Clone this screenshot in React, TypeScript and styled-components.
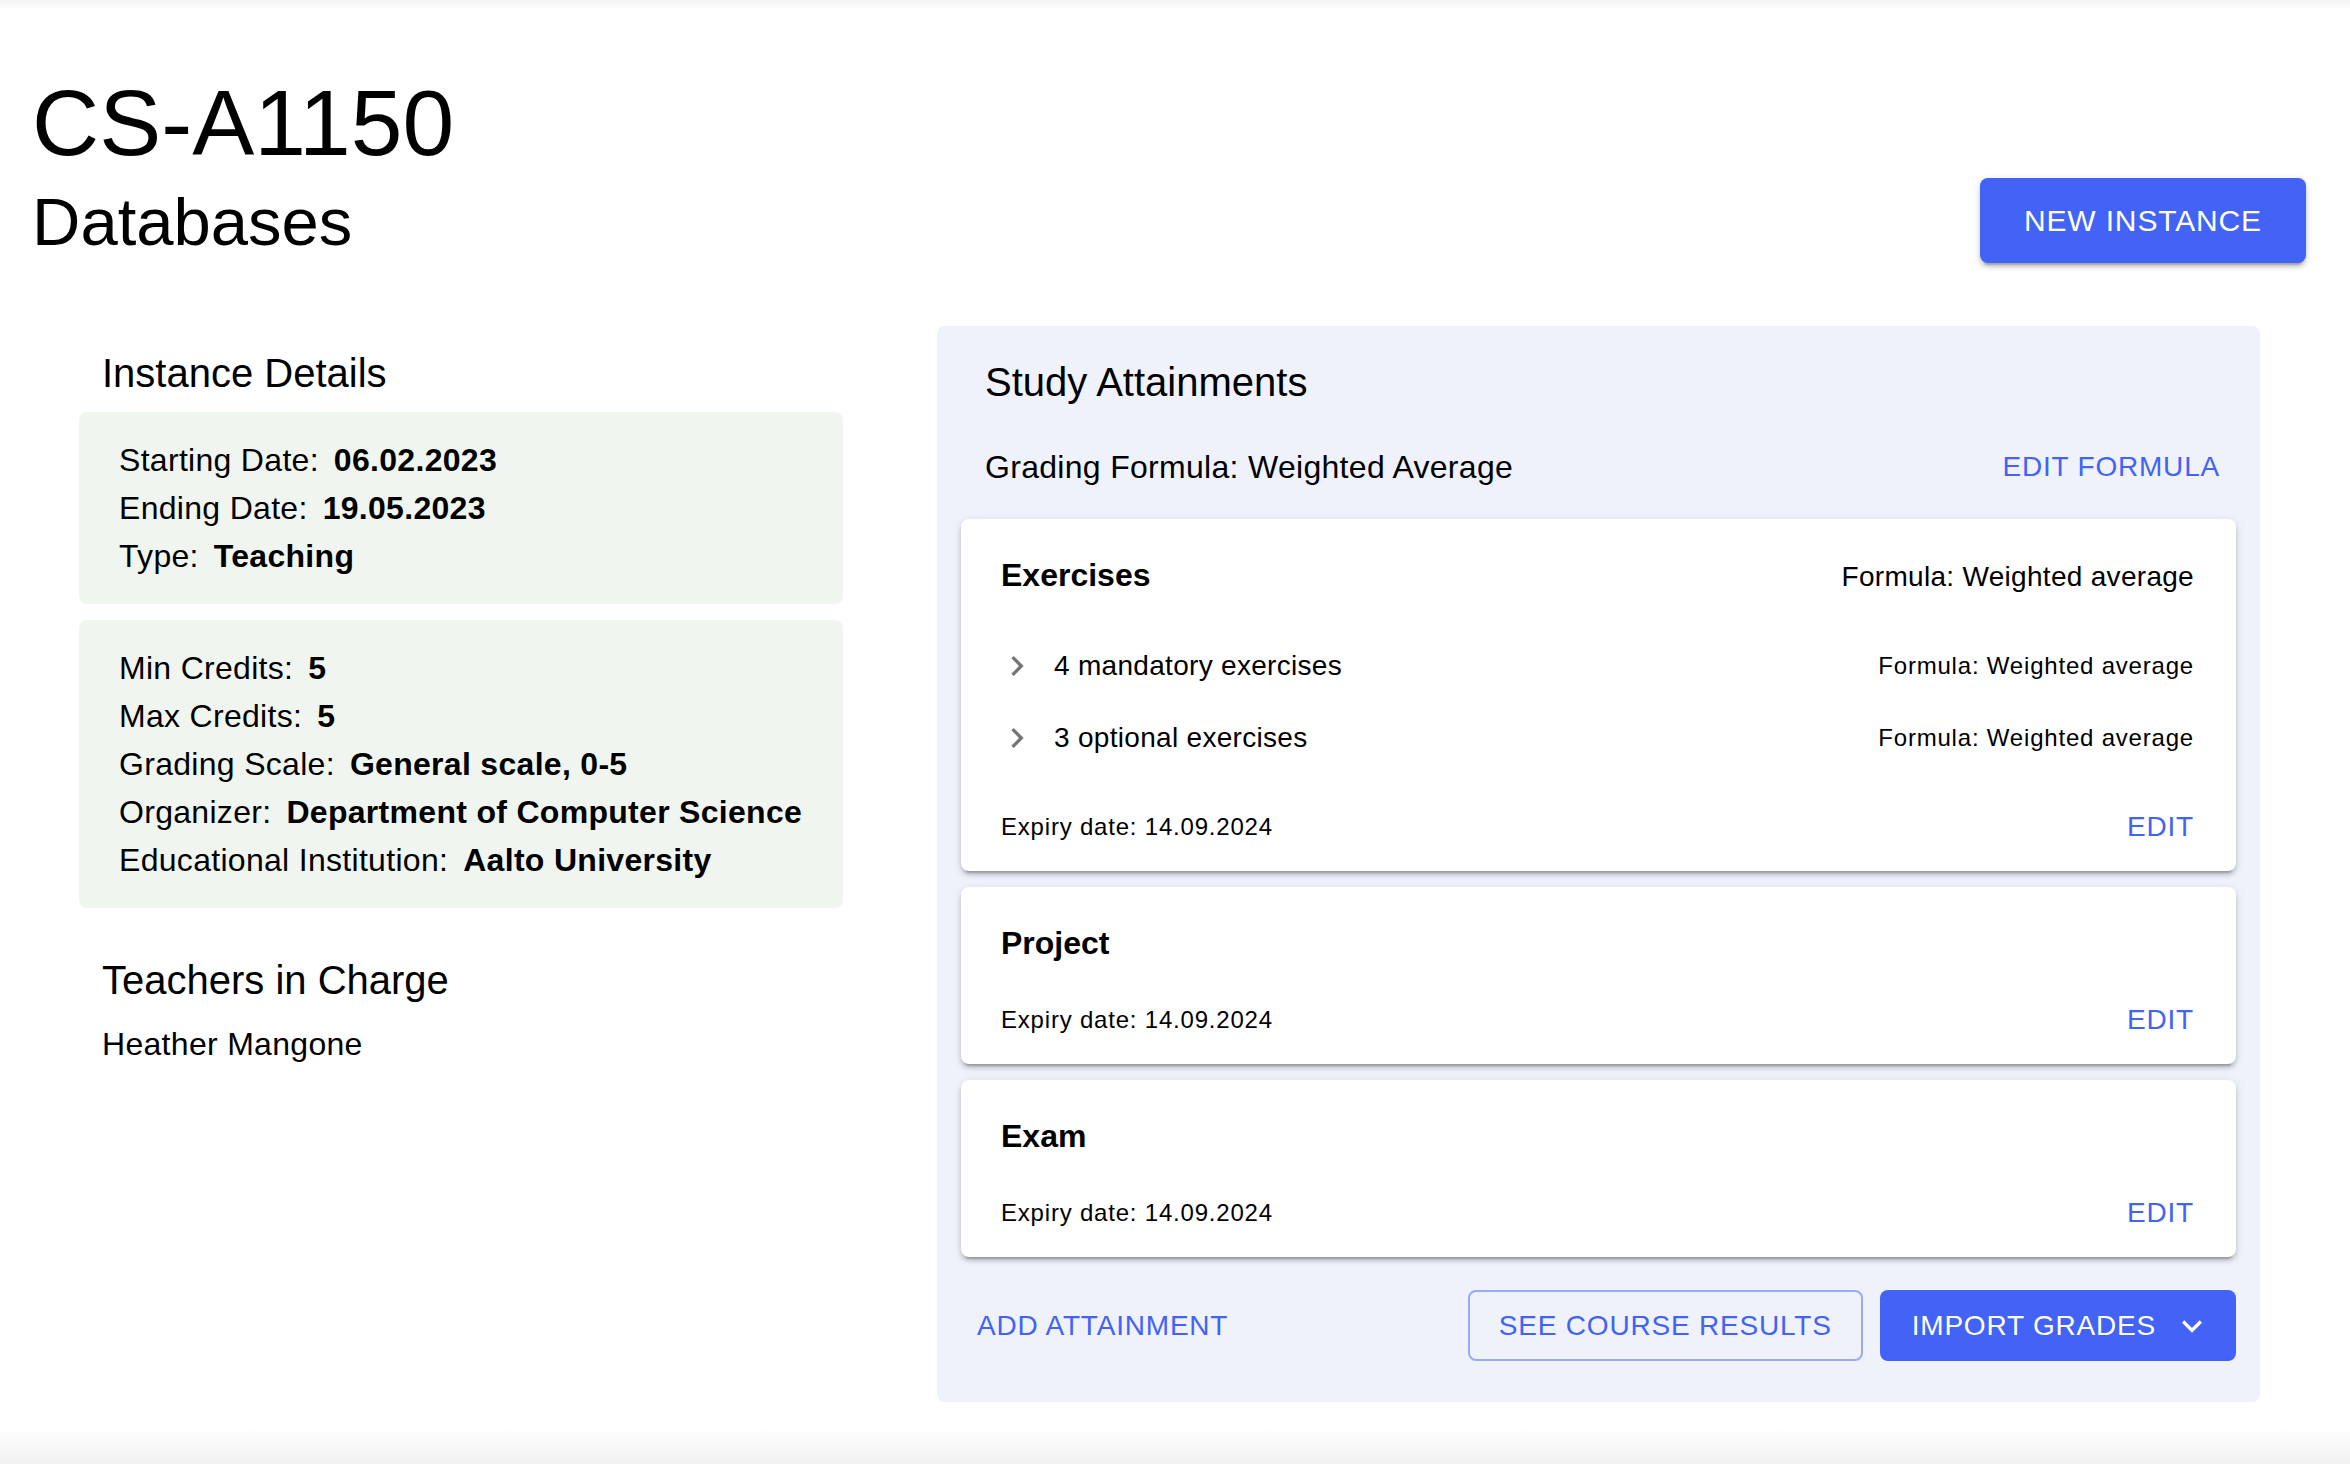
import React from 'react';
import styled, { createGlobalStyle } from 'styled-components';

const BLUE = '#4263F5';

const GlobalStyle = createGlobalStyle`
  html, body {
    margin: 0;
    padding: 0;
  }
  body {
    font-family: "Liberation Sans", Arial, Helvetica, sans-serif;
    color: #111;
    background: #fff;
  }
  * { box-sizing: border-box; }
`;

const Page = styled.div`
  min-height: 100vh;
  padding: 68px 44px 0 32px;
  background: linear-gradient(
    to bottom,
    #f4f4f4 0px,
    #ffffff 9px,
    #ffffff calc(100% - 36px),
    #f1f1f1 100%
  );
`;

const Header = styled.header`
  display: flex;
  justify-content: space-between;
  align-items: flex-end;
`;

const TitleBlock = styled.div`
  display: flex;
  flex-direction: column;
`;

const CourseCode = styled.h1`
  margin: 0;
  font-size: 93px;
  line-height: 110px;
  font-weight: 400;
  color: #000;
`;

const CourseName = styled.h2`
  margin: 3px 0 0;
  font-size: 67px;
  line-height: 82px;
  font-weight: 400;
  color: #000;
`;

const BaseButton = styled.button`
  font-family: inherit;
  text-transform: uppercase;
  font-weight: 400;
  letter-spacing: 0.8px;
  cursor: pointer;
  display: inline-flex;
  align-items: center;
  white-space: nowrap;
`;

const PrimaryButton = styled(BaseButton)<{ $large?: boolean }>`
  background: ${BLUE};
  color: #fff;
  border: none;
  border-radius: 8px;
  font-size: ${(p) => (p.$large ? '30px' : '28px')};
  line-height: ${(p) => (p.$large ? '53px' : '47px')};
  padding: ${(p) => (p.$large ? '16px 44px' : '12px 32px')};
  letter-spacing: ${(p) => (p.$large ? '0.86px' : '0.8px')};
  box-shadow: ${(p) =>
    p.$large
      ? '0 6px 2px -4px rgba(0,0,0,0.2), 0 4px 4px 0 rgba(0,0,0,0.14), 0 2px 10px 0 rgba(0,0,0,0.12)'
      : 'none'};
`;

const OutlinedButton = styled(BaseButton)`
  background: transparent;
  color: ${BLUE};
  border: 2px solid rgba(66, 99, 245, 0.5);
  border-radius: 8px;
  font-size: 28px;
  line-height: 47px;
  padding: 10px 29px;
`;

const TextButton = styled(BaseButton)<{ $edge?: boolean }>`
  background: transparent;
  color: ${BLUE};
  border: none;
  font-size: 28px;
  line-height: 49px;
  padding: 12px 16px;
  margin-right: ${(p) => (p.$edge ? '-16px' : '0')};
`;

const EndIcon = styled.span`
  display: inline-flex;
  margin-left: 16px;
  margin-right: -8px;
`;

const Content = styled.main`
  display: grid;
  grid-template-columns: 764px 1323px;
  column-gap: 94px;
  align-items: start;
  margin: 63px 0 0 47px;
`;

const LeftColumn = styled.section`
  display: flex;
  flex-direction: column;
  padding-top: 19px;
`;

const SectionTitle = styled.h3<{ $spaced?: boolean }>`
  margin: ${(p) => (p.$spaced ? '44px 0 0' : '0 0 11px')};
  padding-left: 23px;
  font-size: 40px;
  line-height: 56px;
  font-weight: 400;
  color: #000;
`;

const InfoBox = styled.div`
  background: #f1f5f0;
  border-radius: 8px;
  padding: 24px 16px 24px 40px;
  & + & {
    margin-top: 16px;
  }
`;

const InfoLine = styled.div`
  font-size: 32px;
  line-height: 48px;
  letter-spacing: 0.3px;
  white-space: nowrap;
  color: #000;
`;

const InfoValue = styled.strong`
  font-weight: 700;
  margin-left: 15px;
`;

const TeacherName = styled.div`
  margin-top: 12px;
  padding-left: 23px;
  font-size: 32px;
  line-height: 48px;
  letter-spacing: 0.3px;
  color: #000;
`;

const Panel = styled.section`
  background: #eff2fa;
  border-radius: 8px;
  padding: 24px 24px 41px;
  display: flex;
  flex-direction: column;
`;

const PanelTitle = styled.h3`
  margin: 0;
  padding-left: 24px;
  font-size: 40px;
  line-height: 64px;
  font-weight: 400;
  color: #000;
`;

const FormulaRow = styled.div`
  margin-top: 16px;
  display: flex;
  justify-content: space-between;
  align-items: center;
  padding-left: 24px;
`;

const FormulaLabel = styled.span`
  font-size: 32px;
  line-height: 48px;
  letter-spacing: 0.3px;
  color: #000;
`;

const CardList = styled.div`
  margin-top: 16px;
  display: flex;
  flex-direction: column;
  gap: 16px;
`;

const Card = styled.article`
  background: #fff;
  border-radius: 8px;
  padding: 32px 42px 8px 40px;
  box-shadow: 0 6px 2px -4px rgba(0, 0, 0, 0.2), 0 4px 4px 0 rgba(0, 0, 0, 0.14),
    0 2px 10px 0 rgba(0, 0, 0, 0.12);
`;

const CardHeader = styled.div`
  display: flex;
  justify-content: space-between;
  align-items: baseline;
  height: 48px;
`;

const CardTitle = styled.h4`
  margin: 0;
  font-size: 32px;
  line-height: 48px;
  font-weight: 700;
  color: #000;
`;

const CardFormula = styled.span`
  font-size: 28px;
  letter-spacing: 0.3px;
  color: #000;
`;

const SubList = styled.ul`
  list-style: none;
  margin: 31px 0 0;
  padding: 0;
`;

const SubRow = styled.li`
  display: flex;
  align-items: center;
  height: 72px;
`;

const ChevronBox = styled.span`
  display: inline-flex;
  width: 40px;
  height: 40px;
  margin-left: -4px;
  margin-right: 17px;
`;

const SubLabel = styled.span`
  font-size: 28px;
  letter-spacing: 0.3px;
  color: #000;
`;

const SubFormula = styled.span`
  margin-left: auto;
  font-size: 24px;
  letter-spacing: 0.8px;
  color: #000;
`;

const CardFooter = styled.div`
  margin-top: 16px;
  display: flex;
  justify-content: space-between;
  align-items: center;
`;

const Expiry = styled.span`
  font-size: 24px;
  letter-spacing: 0.8px;
  color: #000;
`;

const ActionRow = styled.div`
  margin-top: 33px;
  height: 71px;
  display: flex;
  justify-content: space-between;
  align-items: center;
`;

const ActionGroup = styled.div`
  display: flex;
  gap: 17px;
`;

const ChevronRight = () => (
  <svg width="40" height="40" viewBox="0 0 24 24" aria-hidden="true">
    <path d="M10 6 8.59 7.41 13.17 12l-4.58 4.59L10 18l6-6z" fill="#757575" />
  </svg>
);

const ExpandMore = () => (
  <svg width="40" height="40" viewBox="0 0 24 24" aria-hidden="true">
    <path d="M16.59 8.59 12 13.17 7.41 8.59 6 10l6 6 6-6z" fill="#fff" />
  </svg>
);

type SubPart = { label: string; formula: string };
type Attainment = { name: string; formula?: string; expiry: string; parts?: SubPart[] };

const attainments: Attainment[] = [
  {
    name: 'Exercises',
    formula: 'Formula: Weighted average',
    expiry: '14.09.2024',
    parts: [
      { label: '4 mandatory exercises', formula: 'Formula: Weighted average' },
      { label: '3 optional exercises', formula: 'Formula: Weighted average' },
    ],
  },
  { name: 'Project', expiry: '14.09.2024' },
  { name: 'Exam', expiry: '14.09.2024' },
];

const AttainmentCard: React.FC<{ item: Attainment }> = ({ item }) => (
  <Card>
    <CardHeader>
      <CardTitle>{item.name}</CardTitle>
      {item.formula && <CardFormula>{item.formula}</CardFormula>}
    </CardHeader>
    {item.parts && (
      <SubList>
        {item.parts.map((p) => (
          <SubRow key={p.label}>
            <ChevronBox>
              <ChevronRight />
            </ChevronBox>
            <SubLabel>{p.label}</SubLabel>
            <SubFormula>{p.formula}</SubFormula>
          </SubRow>
        ))}
      </SubList>
    )}
    <CardFooter>
      <Expiry>Expiry date: {item.expiry}</Expiry>
      <TextButton $edge>Edit</TextButton>
    </CardFooter>
  </Card>
);

export default function App() {
  return (
    <>
      <GlobalStyle />
      <Page>
        <Header>
          <TitleBlock>
            <CourseCode>CS-A1150</CourseCode>
            <CourseName>Databases</CourseName>
          </TitleBlock>
          <PrimaryButton $large>New instance</PrimaryButton>
        </Header>
        <Content>
          <LeftColumn>
            <SectionTitle>Instance Details</SectionTitle>
            <InfoBox>
              <InfoLine>
                Starting Date:<InfoValue>06.02.2023</InfoValue>
              </InfoLine>
              <InfoLine>
                Ending Date:<InfoValue>19.05.2023</InfoValue>
              </InfoLine>
              <InfoLine>
                Type:<InfoValue>Teaching</InfoValue>
              </InfoLine>
            </InfoBox>
            <InfoBox>
              <InfoLine>
                Min Credits:<InfoValue>5</InfoValue>
              </InfoLine>
              <InfoLine>
                Max Credits:<InfoValue>5</InfoValue>
              </InfoLine>
              <InfoLine>
                Grading Scale:<InfoValue>General scale, 0-5</InfoValue>
              </InfoLine>
              <InfoLine>
                Organizer:<InfoValue>Department of Computer Science</InfoValue>
              </InfoLine>
              <InfoLine>
                Educational Institution:<InfoValue>Aalto University</InfoValue>
              </InfoLine>
            </InfoBox>
            <SectionTitle $spaced>Teachers in Charge</SectionTitle>
            <TeacherName>Heather Mangone</TeacherName>
          </LeftColumn>
          <Panel>
            <PanelTitle>Study Attainments</PanelTitle>
            <FormulaRow>
              <FormulaLabel>Grading Formula: Weighted Average</FormulaLabel>
              <TextButton>Edit formula</TextButton>
            </FormulaRow>
            <CardList>
              {attainments.map((a) => (
                <AttainmentCard key={a.name} item={a} />
              ))}
            </CardList>
            <ActionRow>
              <TextButton>Add attainment</TextButton>
              <ActionGroup>
                <OutlinedButton>See course results</OutlinedButton>
                <PrimaryButton>
                  Import grades
                  <EndIcon>
                    <ExpandMore />
                  </EndIcon>
                </PrimaryButton>
              </ActionGroup>
            </ActionRow>
          </Panel>
        </Content>
      </Page>
    </>
  );
}
